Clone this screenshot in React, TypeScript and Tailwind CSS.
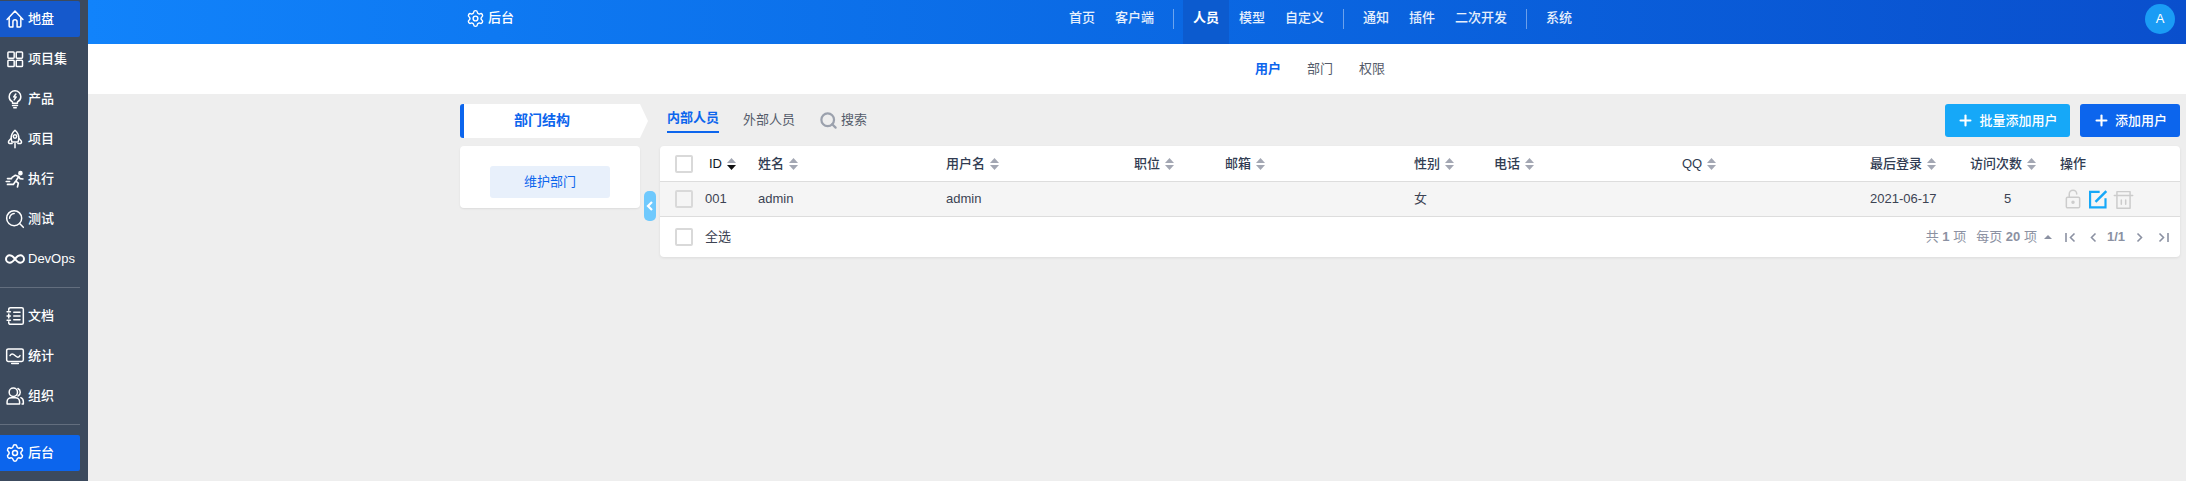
import React from "react";
import { Settings, Search, Plus } from "lucide-react";

const font = "font-['Liberation_Sans','Noto_Sans_CJK_SC',sans-serif]";

type IconProps = { className?: string };

const svgBase = {
  viewBox: "0 0 24 24",
  fill: "none",
  stroke: "currentColor",
  strokeWidth: 1.8,
  strokeLinecap: "round" as const,
  strokeLinejoin: "round" as const,
};

const HomeIcon = ({ className }: IconProps) => (
  <svg {...svgBase} className={className}>
    <path d="M2.500 12.500 12 2.500l9.500 10M5 10.500V20.500a1 1 0 0 0 1 1h3.500v-6a2.500 2.500 0 0 1 5 0v6H18a1 1 0 0 0 1-1V10.500" />
  </svg>
);
const GridIcon = ({ className }: IconProps) => (
  <svg {...svgBase} className={className}>
    <rect x="3.500" y="3.500" width="7.500" height="7.500" rx="1" />
    <rect x="13.500" y="3.500" width="7.500" height="7.500" rx="1" />
    <rect x="3.500" y="13.500" width="7.500" height="7.500" rx="1" />
    <rect x="13.500" y="13.500" width="7.500" height="7.500" rx="1" />
  </svg>
);
const BulbIcon = ({ className }: IconProps) => (
  <svg {...svgBase} className={className}>
    <path d="M9 17v-1.500C6.800 14.300 5 12 5 9.200a7 7 0 0 1 14 0c0 2.800-1.800 5.100-4 6.300V17z" />
    <path d="M9 19.700h6M10.500 22.500h3M13 6l-2.500 3.500h3L11 13" />
  </svg>
);
const RocketIcon = ({ className }: IconProps) => (
  <svg {...svgBase} className={className}>
    <path d="M12 1.500c3 2.500 4.500 5.500 4.500 9 0 2-.3 3.500-.8 5h-7.400c-.5-1.500-.8-3-.8-5 0-3.500 1.500-6.500 4.500-9z" />
    <circle cx="12" cy="9" r="2" />
    <path d="M7.500 11 4.500 14.500c-.6 1-.4 2.500 1 3h3M16.500 11l3 3.500c.6 1 .4 2.500-1 3h-3M12 17.500v5" />
  </svg>
);
const RunIcon = ({ className }: IconProps) => (
  <svg {...svgBase} strokeWidth={2} className={className}>
    <circle cx="18.500" cy="5" r="1.800" fill="currentColor" />
    <path d="M8.500 10 12.500 7.500l4 1.500-3.500 5.500 3 2.500-1 4.500M12.500 15 10 18.500H3M16.500 9l1.500 2.500 3.500.5M3 11.500h5M1.500 15h4" />
  </svg>
);
const TestIcon = ({ className }: IconProps) => (
  <svg {...svgBase} className={className}>
    <circle cx="11" cy="11" r="9" />
    <path d="M17.500 17.500 22 22M5.500 11A5.500 5.500 0 0 1 11 5.500" />
  </svg>
);
const InfinityIcon = ({ className }: IconProps) => (
  <svg {...svgBase} strokeWidth={2.400} className={className}>
    <path d="M12 12c-2-2.700-3.700-4.500-6.300-4.500a4.500 4.500 0 0 0 0 9c2.600 0 4.300-1.800 6.300-4.500zm0 0c2 2.700 3.700 4.500 6.300 4.500a4.500 4.500 0 0 0 0-9c-2.600 0-4.300 1.800-6.300 4.500z" />
  </svg>
);
const DocIcon = ({ className }: IconProps) => (
  <svg {...svgBase} className={className}>
    <path d="M4.500 5V4a2 2 0 0 1 2-2H20a2 2 0 0 1 2 2v16a2 2 0 0 1-2 2H6.500a2 2 0 0 1-2-2v-1M4.500 9.500v5" />
    <path d="M2.500 7h4M2.500 12h4M2.500 17h4M10.500 7.500H18M10.500 12H18M10.500 16.500H18" />
  </svg>
);
const StatsIcon = ({ className }: IconProps) => (
  <svg {...svgBase} className={className}>
    <rect x="2" y="3.500" width="20" height="15" rx="2" />
    <path d="M6 11.500c1.500-2.500 3.500-2.500 6 0s4.500 2.500 6 0M8 21h8" />
  </svg>
);
const OrgIcon = ({ className }: IconProps) => (
  <svg {...svgBase} className={className}>
    <circle cx="10" cy="7.500" r="5" />
    <path d="M2.500 21.500v-2.500c0-3 2.500-5 5-5h5c2.500 0 5 2 5 5v2.500zM15.500 3a5 5 0 0 1 0 9M19 14c1.800.8 3 2.500 3 4.500v3h-1.500" />
  </svg>
);
const LockIcon = ({ className }: IconProps) => (
  <svg {...svgBase} strokeWidth={1.8} className={className}>
    <rect x="4" y="10" width="16" height="12.500" rx="1.500" />
    <path d="M7.500 10V6a4.500 4.500 0 0 1 9 0" />
    <circle cx="12" cy="16" r="1.200" fill="currentColor" />
  </svg>
);
const EditIcon = ({ className }: IconProps) => (
  <svg viewBox="0 0 24 24" fill="none" stroke="currentColor" strokeWidth={2.600} className={className}>
    <path d="M21 11v11H2.500V3.500H14" />
    <path d="M9 15.500 22 2.500" strokeWidth={3} />
  </svg>
);
const TrashIcon = ({ className }: IconProps) => (
  <svg {...svgBase} strokeWidth={1.700} className={className}>
    <path d="M1.500 7.500h21M4.500 7.500V3h15v4.500M4.500 7.500V22h15V7.500M9.500 12.500v5M14.500 12.500v5" />
  </svg>
);

const Sort = ({ active }: { active?: boolean }) => (
  <span className="ml-[5px] inline-flex flex-col gap-[2px] align-middle">
    <svg width="9" height="5" viewBox="0 0 9 5" className="text-[#a3a7b3]"><path d="M4.500 0 9 5H0z" fill="currentColor" /></svg>
    <svg width="9" height="5" viewBox="0 0 9 5" className={active ? "text-[#111111]" : "text-[#a3a7b3]"}><path d="M0 0h9L4.500 5z" fill="currentColor" /></svg>
  </span>
);

const Checkbox = () => (
  <span className="block h-[18px] w-[18px] rounded-[2px] border-2 border-[#d9d9d9] bg-transparent" />
);

type SideProps = { label: string; Icon: (p: IconProps) => React.ReactElement; cls?: string };

const GearIcon = ({ className }: IconProps) => <Settings className={className} strokeWidth={1.8} />;

const sideTop: SideProps[] = [
  { label: "地盘", Icon: HomeIcon, cls: "bg-[#1559cc]" },
  { label: "项目集", Icon: GridIcon },
  { label: "产品", Icon: BulbIcon },
  { label: "项目", Icon: RocketIcon },
  { label: "执行", Icon: RunIcon },
  { label: "测试", Icon: TestIcon },
  { label: "DevOps", Icon: InfinityIcon },
];
const sideMid: SideProps[] = [
  { label: "文档", Icon: DocIcon },
  { label: "统计", Icon: StatsIcon },
  { label: "组织", Icon: OrgIcon },
];

const SideItem = ({ label, Icon, cls }: SideProps) => (
  <div className={`flex h-[36px] w-[80px] items-center gap-[3px] rounded-r-[2px] pl-[5px] text-[13px] font-medium text-white ${cls ?? ""}`}>
    <Icon className="h-[20px] w-[20px] shrink-0" />
    <span>{label}</span>
  </div>
);

const cols = "grid grid-cols-[45px_53px_188px_188px_91px_189px_80px_188px_188px_100px_90px_1fr] items-center";

const heads = ["姓名", "用户名", "职位", "邮箱", "性别", "电话", "QQ", "最后登录", "访问次数"];

export default function App() {
  return (
    <div className={`flex h-[481px] w-[2186px] overflow-hidden bg-[#eeeeee] ${font}`}>
      <aside className="flex w-[88px] shrink-0 flex-col bg-[#3c4a5d] pt-[1px]">
        <div className="flex flex-col gap-[4px]">
          {sideTop.map((i) => <SideItem key={i.label} {...i} />)}
        </div>
        <div className="mb-[10px] mt-[10px] h-[1px] w-[80px] bg-[#636e7e]" />
        <div className="flex flex-col gap-[4px]">
          {sideMid.map((i) => <SideItem key={i.label} {...i} />)}
        </div>
        <div className="mb-[10px] mt-[10px] h-[1px] w-[80px] bg-[#636e7e]" />
        <SideItem label="后台" Icon={GearIcon} cls="bg-[#0c65ed]" />
      </aside>

      <div className="flex min-w-0 flex-1 flex-col">
        <header className="h-[44px] bg-gradient-to-r from-[#1183fb] to-[#0a4fcd] pl-[372px] pr-[6px]">
          <div className="grid h-full grid-cols-[1fr_auto_1fr] text-[13px] font-medium text-white">
            <div className="flex items-center gap-[3px] pb-[8px] pl-[6px]">
              <Settings className="h-[19px] w-[19px]" strokeWidth={1.8} />
              <span>后台</span>
            </div>
            <nav className="ml-[1px] flex items-stretch text-white/90">
              <NavItem t="首页" />
              <NavItem t="客户端" />
              <Divider />
              <NavItem t="人员" active />
              <NavItem t="模型" />
              <NavItem t="自定义" />
              <Divider />
              <NavItem t="通知" />
              <NavItem t="插件" />
              <NavItem t="二次开发" />
              <Divider />
              <NavItem t="系统" />
            </nav>
            <div className="flex justify-end pr-[5px] pt-[4px]">
              <span className="flex h-[30px] w-[30px] items-center justify-center rounded-full bg-[#1a9cf5] text-[13px] font-normal text-white">A</span>
            </div>
          </div>
        </header>

        <div className="flex h-[50px] items-center justify-center gap-[26px] bg-white pl-[366px] text-[13px] text-[#545b6a]">
          <span className="font-bold text-[#0c65ed]">用户</span>
          <span>部门</span>
          <span>权限</span>
        </div>

        <main className="relative flex gap-[20px] pl-[372px] pr-[6px] pt-[10px]">
          <div className="flex w-[180px] shrink-0 flex-col gap-[8px]">
            <div className="flex h-[34px] w-[188px] items-center justify-center rounded-l-[3px] border-l-4 border-[#0c65ed] bg-white pb-[2px] pr-[28px] text-[14px] font-bold text-[#0c65ed] [clip-path:polygon(0_0,180px_0,188px_50%,180px_100%,0_100%)]">
              部门结构
            </div>
            <div className="rounded-[4px] bg-white px-[30px] pb-[10px] pt-[20px] shadow-[0_1px_2px_rgba(0,0,0,0.08)]">
              <button className="flex h-[32px] w-full items-center justify-center rounded-[3px] bg-[#e8f0fb] text-[13px] text-[#0c65ed]">
                维护部门
              </button>
            </div>
            <button className="absolute left-[556px] top-[97px] flex h-[30px] w-[12px] items-center justify-center rounded-[5px] bg-[#6fc9fd] text-white">
              <svg width="8" height="10" viewBox="0 0 8 10" fill="none" stroke="currentColor" strokeWidth="2.200"><path d="M6 1 2 5l4 4" /></svg>
            </button>
          </div>

          <div className="flex min-w-0 flex-1 flex-col gap-[8px]">
            <div className="flex h-[34px] items-start justify-between">
              <div className="flex h-[34px] items-start pl-[7px] text-[13px] text-[#545b6a]">
                <span className="flex h-[29px] items-center border-b-2 border-[#0c65ed] pt-[1px] font-bold text-[#0c65ed]">内部人员</span>
                <span className="ml-[24px] flex h-[31px] items-center">外部人员</span>
                <span className="ml-[24px] flex h-[32px] items-center gap-[3px]">
                  <Search className="h-[19px] w-[19px] text-[#9ba1ad]" strokeWidth={2.8} />
                  搜索
                </span>
              </div>
              <div className="flex gap-[10px] text-[13px] font-medium text-white">
                <button className="flex h-[33px] w-[125px] items-center justify-center gap-[5px] rounded-[3px] bg-[#16a8f8]">
                  <Plus className="h-[17px] w-[17px]" strokeWidth={3} />批量添加用户
                </button>
                <button className="flex h-[33px] w-[100px] items-center justify-center gap-[5px] rounded-[3px] bg-[#0c65ed]">
                  <Plus className="h-[17px] w-[17px]" strokeWidth={3} />添加用户
                </button>
              </div>
            </div>

            <div className="rounded-[4px] bg-white text-[13px] text-[#3c4353] shadow-[0_1px_3px_rgba(0,0,0,0.08)]">
              <div className={`${cols} h-[36px] border-b border-[#dddddd] font-medium text-[#313c52]`}>
                <span className="pl-[15px]"><Checkbox /></span>
                <span className="pl-[4px] text-[#111827]">ID<Sort active /></span>
                {heads.map((h) => (
                  <span key={h}>{h}<Sort /></span>
                ))}
                <span>操作</span>
              </div>
              <div className={`${cols} h-[35px] border-b border-[#dddddd] bg-[#f5f5f5]`}>
                <span className="pl-[15px]"><Checkbox /></span>
                <span>001</span>
                <span>admin</span>
                <span>admin</span>
                <span />
                <span />
                <span>女</span>
                <span />
                <span />
                <span>2021-06-17</span>
                <span className="pl-[34px]">5</span>
                <span className="flex items-center gap-[5px] pl-[3px]">
                  <LockIcon className="h-[20px] w-[20px] text-[#cccccc]" />
                  <EditIcon className="h-[20px] w-[20px] text-[#16a8f8]" />
                  <TrashIcon className="h-[21px] w-[21px] text-[#cccccc]" />
                </span>
              </div>
              <div className="flex h-[40px] items-center justify-between pl-[15px] pr-[11px]">
                <div className="flex items-center gap-[12px]">
                  <Checkbox />
                  <span>全选</span>
                </div>
                <div className="flex items-center text-[#8b91a2]">
                  <span>共 <b>1</b> 项</span>
                  <span className="ml-[10px]">每页 <b>20</b> 项</span>
                  <svg width="8" height="4" viewBox="0 0 8 4" className="ml-[7px]"><path d="M4 0l4 4H0z" fill="currentColor" /></svg>
                  <svg width="11" height="11" viewBox="0 0 11 11" fill="none" stroke="currentColor" strokeWidth="1.600" className="ml-[13px]"><path d="M1 1v9M9.500 1.500 5.500 5.500l4 4" /></svg>
                  <svg width="8" height="11" viewBox="0 0 8 11" fill="none" stroke="currentColor" strokeWidth="1.600" className="ml-[13px]"><path d="M6.500 1.500l-4 4 4 4" /></svg>
                  <b className="ml-[10px]">1/1</b>
                  <svg width="8" height="11" viewBox="0 0 8 11" fill="none" stroke="currentColor" strokeWidth="1.600" className="ml-[11px]"><path d="M1.500 1.500l4 4-4 4" /></svg>
                  <svg width="11" height="11" viewBox="0 0 11 11" fill="none" stroke="currentColor" strokeWidth="1.600" className="ml-[14px]"><path d="M10 1v9M1.500 1.500l4 4-4 4" /></svg>
                </div>
              </div>
            </div>
          </div>
        </main>
      </div>
    </div>
  );
}

function NavItem({ t, active }: { t: string; active?: boolean }) {
  return (
    <span className={`flex items-center px-[10px] pb-[8px] ${active ? "bg-[#0c5bcf] font-bold text-white" : ""}`}>{t}</span>
  );
}
function Divider() {
  return <span className="mx-[9px] mb-[15px] mt-[9px] w-[1px] bg-white/40" />;
}
